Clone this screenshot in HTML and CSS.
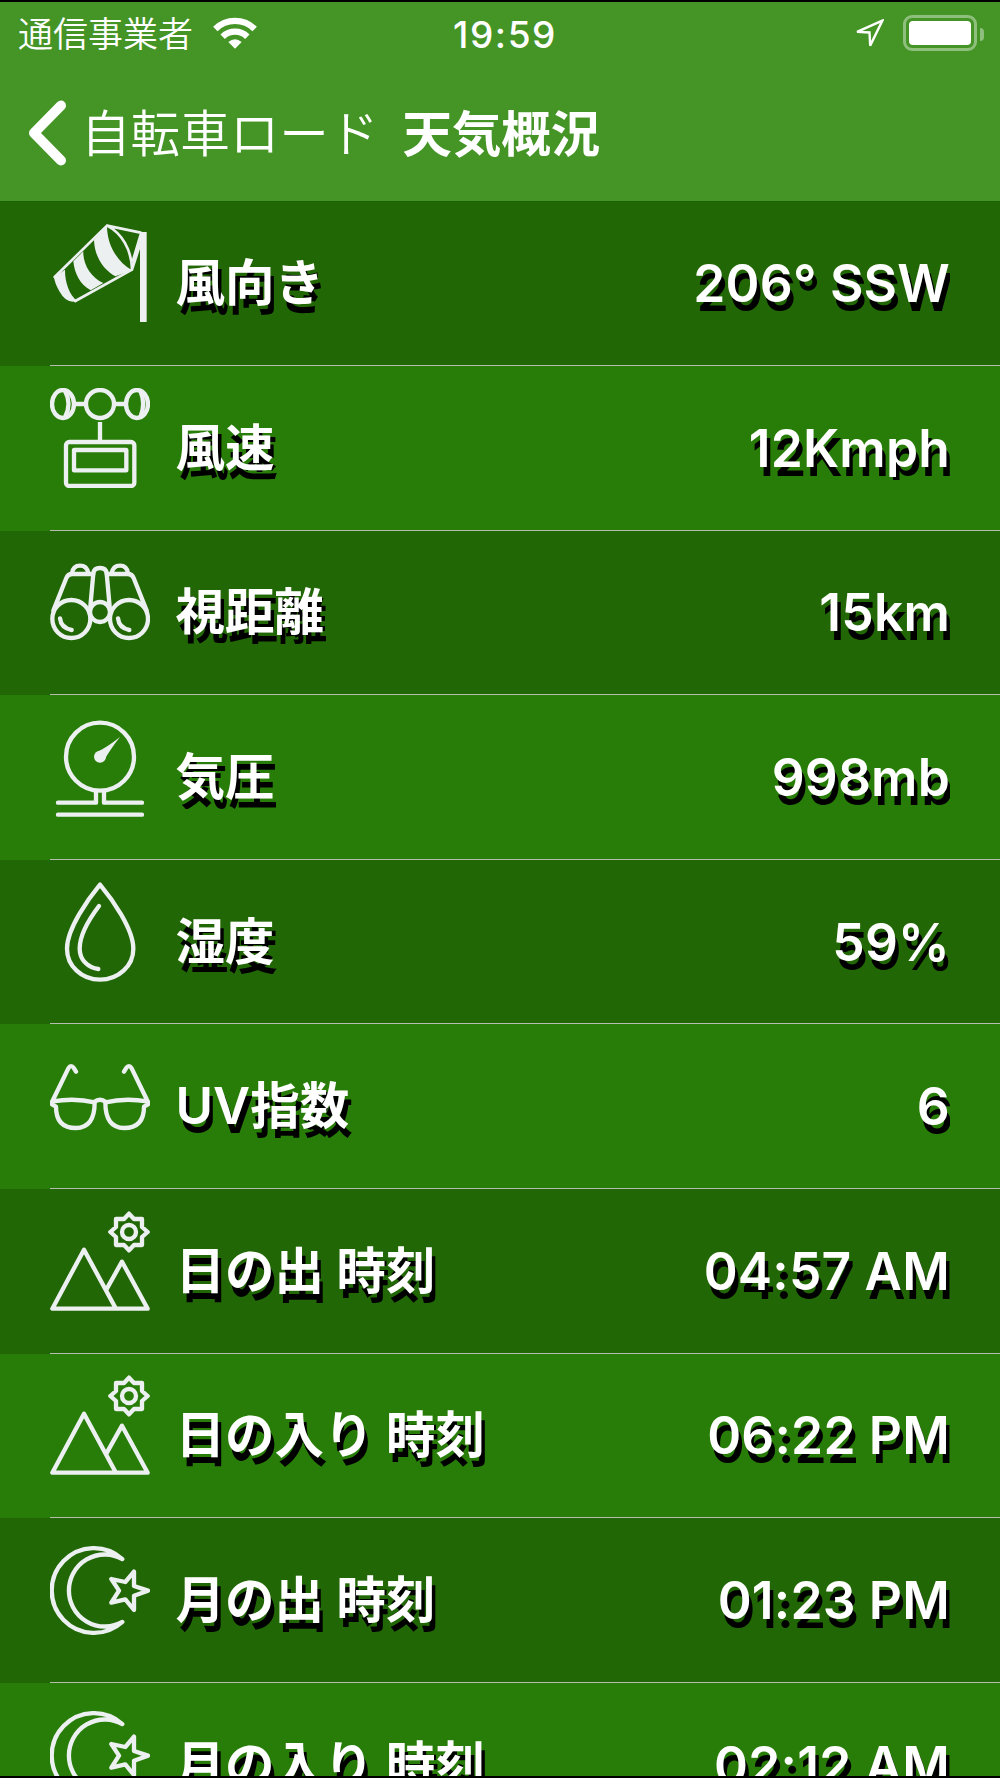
FILE: index.html
```html
<!DOCTYPE html>
<html lang="ja">
  <head>
    <meta charset="utf-8" />
    <title>天気概況</title>
    <link rel="stylesheet" href="styles.css" />
  </head>
  <body>
    <!-- icons used by more than one row -->
    <svg class="defs">
      <symbol id="mountains" viewBox="0 0 300 300">
        <path d="M197 292L102 116L7 293H293L216 152L169 236" />
        <circle cx="237" cy="63" r="21" />
        <path d="M237 8l15 16h24v24l17 15l-17 15v24h-24l-15 16l-15 -16h-24v-24l-17 -15l17 -15v-24h24z" />
      </symbol>
      <symbol id="moon" viewBox="0 0 300 300">
        <path d="M217 57A127 127 0 1 0 217 246A108 108 0 1 1 217 57Z" />
        <path d="M294 152L252 167V210L226 178L184 188L207 152L184 117L226 126L252 95V138Z" />
      </symbol>
    </svg>

    <header>
      <div class="status">
        <div class="carrier">
          <span>通信事業者</span>
          <svg class="wifi" viewBox="0 0 132 96">
            <path d="M7 36A84 84 0 0 1 125 36M29 59A53 53 0 0 1 103 59" />
            <path class="solid" d="M66 95L46 75Q66 58 86 75Z" />
          </svg>
        </div>
        <div class="time">19:59</div>
        <div class="status-right">
          <svg class="location" viewBox="0 0 92 92">
            <path d="M87 5L12 38L49 40L51 79Z" />
          </svg>
          <div class="battery"><div class="level"></div></div>
          <div class="cap"></div>
        </div>
      </div>
      <nav>
        <svg class="back" viewBox="0 0 38 66">
          <path d="M33 5.5L6 33L33 60.5" />
        </svg>
        <span class="back-text">自転車ロード</span>
        <h1>天気概況</h1>
      </nav>
    </header>

    <main>
      <div class="row">
        <div class="inner">
          <svg class="icon" viewBox="0 0 300 300">
            <g class="solid">
              <path d="M270 27h20v270h-20z" />
              <path d="M171 8C171 65 200 115 246 142L196 160C160 140 133 100 132 50Z" />
              <path d="M100 85C98 125 125 165 160 180L122 202C90 185 73 150 70 115Z" />
              <path d="M45 140C45 180 58 215 82 234Q50 245 28 205Q14 180 12 163Z" />
            </g>
            <path class="thin" d="M14 162L171 8L272 29M76 234L246 140L271 62M171 8C215 30 245 80 246 140M249 112L272 35" />
          </svg>
          <span class="label">風向き</span>
          <span class="value">206° SSW</span>
        </div>
      </div>
      <div class="row">
        <div class="inner">
          <svg class="icon" viewBox="0 0 300 300">
            <circle cx="150" cy="48" r="42" />
            <ellipse cx="39" cy="48" rx="33" ry="42" />
            <ellipse cx="261" cy="48" rx="33" ry="42" />
            <path class="butt" d="M45 8Q66 48 45 88M271 8Q288 48 271 88M73 48H107M193 48H227M150 102V160" />
            <rect x="48" y="162" width="205" height="132" rx="10" />
            <rect x="72" y="186" width="157" height="61" rx="1" />
          </svg>
          <span class="label">風速</span>
          <span class="value">12Kmph</span>
        </div>
      </div>
      <div class="row">
        <div class="inner">
          <svg class="icon" viewBox="0 0 300 300">
            <circle cx="64" cy="201" r="57" />
            <circle cx="237" cy="201" r="57" />
            <circle cx="150" cy="180" r="30" />
            <path d="M10 176L49 78Q54 66 66 66H130M290 176L251 78Q246 66 234 66H170" />
            <path d="M66 64Q69 41 90 41T115 64M234 64Q231 41 210 41T185 64" />
            <path d="M120 175L130 64Q132 48 150 48T170 64L180 175" />
            <path d="M30 199Q33 228 65 234M204 199Q207 228 238 234" />
          </svg>
          <span class="label">視距離</span>
          <span class="value">15km</span>
        </div>
      </div>
      <div class="row">
        <div class="inner">
          <svg class="icon" viewBox="0 0 300 300">
            <circle cx="150" cy="119" r="102" />
            <circle class="solid" cx="150" cy="119" r="18" />
            <path class="solid" d="M140 106Q172 90 210 60Q180 98 163 129Z" />
            <path d="M24 257H138V225M162 225V257H276M24 293H276" />
          </svg>
          <span class="label">気圧</span>
          <span class="value">998mb</span>
        </div>
      </div>
      <div class="row">
        <div class="inner">
          <svg class="icon" viewBox="0 0 300 300">
            <path d="M150 8C115 50 51 140 51 200C51 252 95 293 150 293S250 252 250 200C250 140 185 50 150 8Z" />
            <path d="M147 72C122 105 89 155 89 200C89 235 116 258 145 261" />
          </svg>
          <span class="label">湿度</span>
          <span class="value">59%</span>
        </div>
      </div>
      <div class="row">
        <div class="inner">
          <svg class="icon" viewBox="0 0 300 300">
            <g id="lens">
              <path d="M78 77L72 67Q63 54 55 67L6 168V175L18 182C18 222 36 246 78 246C116 246 134 218 134 169Q75 155 8 166" />
            </g>
            <use href="#lens" transform="translate(300) scale(-1 1)" />
            <path d="M132 168Q150 155 168 168" />
          </svg>
          <span class="label"><span class="latin">UV</span>指数</span>
          <span class="value">6</span>
        </div>
      </div>
      <div class="row">
        <div class="inner">
          <svg class="icon"><use href="#mountains" /></svg>
          <span class="label">日の出 時刻</span>
          <span class="value">04:57 AM</span>
        </div>
      </div>
      <div class="row">
        <div class="inner">
          <svg class="icon"><use href="#mountains" /></svg>
          <span class="label">日の入り 時刻</span>
          <span class="value">06:22 PM</span>
        </div>
      </div>
      <div class="row">
        <div class="inner">
          <svg class="icon"><use href="#moon" /></svg>
          <span class="label">月の出 時刻</span>
          <span class="value">01:23 PM</span>
        </div>
      </div>
      <div class="row">
        <div class="inner">
          <svg class="icon"><use href="#moon" /></svg>
          <span class="label">月の入り 時刻</span>
          <span class="value">02:12 AM</span>
        </div>
      </div>
    </main>
  </body>
</html>
```
FILE: styles.css
```css
* {
  box-sizing: border-box;
}

body {
  margin: 0;
  height: 1778px;
  display: flex;
  flex-direction: column;
  overflow: hidden;
  border-top: 2px solid black;
  border-bottom: 2px solid black;
  background-color: #449526;
  color: white;
  font-family: Inter, "Noto Sans CJK JP", sans-serif;
  white-space: nowrap;
}

svg {
  display: block;
  flex: none;
  fill: none;
  stroke: white;
  stroke-linecap: round;
  stroke-linejoin: round;
}

.defs {
  display: none;
}

.solid {
  fill: currentColor;
  stroke: none;
}

header {
  flex: none;
  height: 199.5px;
  border-bottom: 1px solid #1f5f06;
}

/* status bar */
.status {
  height: 64px;
  display: grid;
  grid-template-columns: 1fr auto 1fr;
  align-items: center;
  padding: 0 16px 0 18px;
}

.carrier {
  display: flex;
  align-items: center;
  gap: 20px;
  font-size: 35px;
  font-weight: 350;
}

.carrier span {
  margin-top: -5px;
}

.wifi {
  width: 44px;
  height: 32px;
  margin-top: -3px;
  stroke-width: 19;
  stroke-linecap: butt;
}

.time {
  font-size: 37px;
  font-weight: 550;
  letter-spacing: 1.6px;
  padding-left: 8px;
}

.status-right {
  display: flex;
  align-items: center;
  justify-content: flex-end;
}

.location {
  width: 31px;
  height: 31px;
  stroke-width: 7;
  stroke-linejoin: miter;
  margin-right: 19px;
}

.battery {
  width: 74px;
  height: 36px;
  margin-top: -2px;
  padding: 3px;
  border: 3px solid rgba(255, 255, 255, 0.4);
  border-radius: 9px;
}

.level {
  height: 24px;
  border-radius: 4px;
  background-color: white;
}

.cap {
  width: 4px;
  height: 13px;
  margin-left: 3px;
  border-radius: 0 6px 6px 0;
  background-color: rgba(255, 255, 255, 0.4);
}

/* navigation bar */
nav {
  height: 135px;
  display: flex;
  align-items: center;
  padding: 0 0 3px 28px;
  font-size: 49.6px;
}

.back {
  width: 38px;
  height: 66px;
  margin-top: 2px;
  stroke-width: 10;
}

.back-text {
  margin: -4px 0 0 15px;
  font-weight: 350;
}

h1 {
  margin: -4px 0 0 24px;
  font-size: 49.4px;
  font-weight: 600;
}

/* weather list */
main {
  flex: 1;
  min-height: 0;
  overflow: hidden;
}

.row {
  height: 164.6px;
  padding-left: 50px;
  background-color: #216705;
}

.row:nth-child(even) {
  background-color: #287d08;
}

.inner {
  height: 100%;
  display: flex;
  align-items: center;
  padding-right: 50px;
  border-bottom: 1px solid #b4bdae;
}

.icon {
  width: 100px;
  height: 100px;
  margin-bottom: 20px;
  color: #ecf0f1;
  stroke: #ecf0f1;
  stroke-width: 13;
}

.thin {
  stroke-width: 8;
}

.butt {
  stroke-linecap: butt;
}

.label,
.value {
  height: 64px;
  line-height: 64px;
  overflow: hidden;
  text-shadow: 3.5px 9.3px 0 black;
}

.label {
  margin-left: 25.5px;
  padding-right: 4px;
  font-size: 49.5px;
  font-weight: 600;
}

.latin {
  font-size: 51px;
}

.value {
  margin-left: auto;
  font-size: 51.5px;
  font-weight: 580;
  letter-spacing: 0.2px;
}
```
